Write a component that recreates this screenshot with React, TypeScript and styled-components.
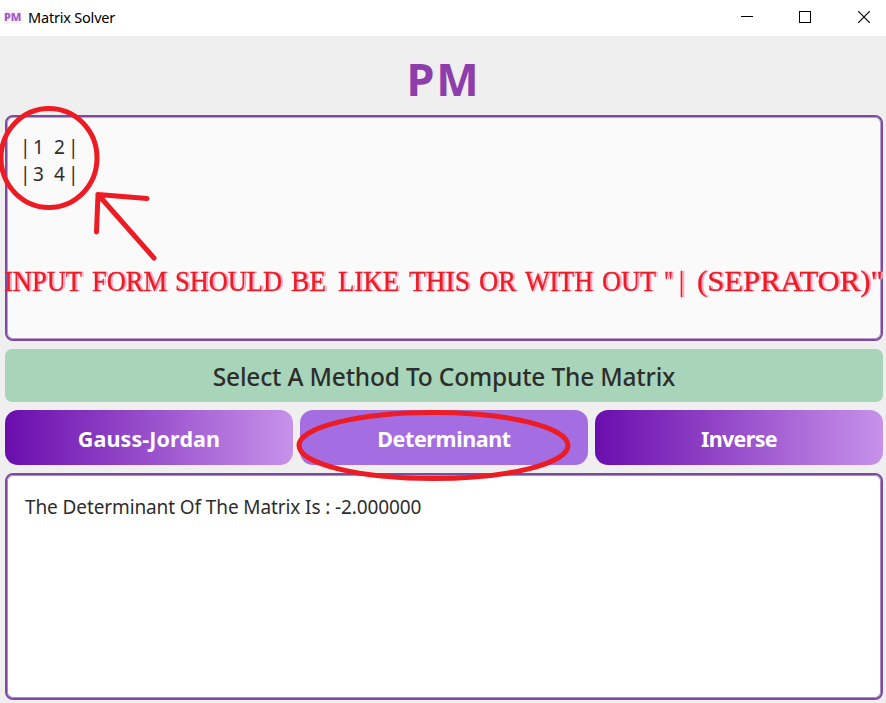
import React from "react";
import styled, { createGlobalStyle, css } from "styled-components";

const GlobalStyle = createGlobalStyle`
  * { box-sizing: border-box; }
  body { margin: 0; background: #efefef; overflow: hidden; }
`;

const Window = styled.main`
  position: relative;
  display: flex;
  flex-direction: column;
  width: 886px;
  height: 703px;
  background: #efefef;
  font-family: "Noto Sans", "Open Sans", sans-serif;
  color: #2d2d2d;
`;

const TitleBar = styled.header`
  display: flex;
  align-items: center;
  justify-content: space-between;
  flex: 0 0 36px;
  padding-left: 4px;
  background: #fff;
`;

const AppIdentity = styled.div`
  display: flex;
  align-items: center;
  gap: 6px;
  padding-bottom: 2px;
`;

const TinyLogo = styled.span`
  display: block;
  width: 18px;
  height: 14px;
  background: #faf3fc;
  color: #a45cc0;
  font: 900 11px/13px "Noto Sans", sans-serif;
  letter-spacing: -0.2px;
  filter: blur(0.7px);
`;

const Title = styled.span`
  font-size: 14.5px;
  line-height: 20px;
  letter-spacing: -0.2px;
  color: #000;
`;

const Controls = styled.div`
  display: flex;
  gap: 14px;
  height: 36px;
`;

const Control = styled.button`
  display: flex;
  align-items: center;
  justify-content: center;
  width: 44px;
  padding: 0 0 2px;
  border: 0;
  background: none;

  &:last-child { margin-left: 1px; }
`;

const Content = styled.section`
  display: flex;
  flex-direction: column;
  flex: 1;
  padding: 0 3px 3px 5px;
`;

const Brand = styled.h1`
  margin: 0;
  height: 79px;
  padding-right: 1px;
  text-align: center;
  color: #8e3eac;
  font-size: 45px;
  font-weight: 700;
  line-height: 86px;
  letter-spacing: 1.8px;
`;

const panel = css`
  border-radius: 8px;
  font-size: 19px;
  line-height: 27px;
  white-space: pre;
`;

const InputPanel = styled.div`
  ${panel}
  height: 226px;
  padding: 17px 13px;
  border: 2px solid #7c4ba0;
  box-shadow: inset 0 0 0 1px #b99fcd;
  background: #fafafa;
`;

const MatrixRow = styled.div`
  display: grid;
  grid-template-columns: 13px 21px 14px 8px;
`;

const Banner = styled.div`
  height: 53px;
  margin-top: 8px;
  border-radius: 7px;
  background: #a8d5ba;
  text-align: center;
  font-size: 24.5px;
  font-weight: 500;
  line-height: 56px;
  letter-spacing: -0.19px;
`;

const Methods = styled.div`
  display: grid;
  grid-template-columns: repeat(3, 1fr);
  gap: 7px;
  margin: 8px 0;
`;

const MethodButton = styled.button<{ $active?: boolean; $tracking?: number }>`
  height: 55px;
  padding: 3px 0 0;
  border: 0;
  border-radius: 13px;
  background: ${({ $active }) => ($active ? "#a56de2" : "linear-gradient(90deg, #6a0dad, #c792ea)")};
  color: #fff;
  font: 700 21.5px/30px "Noto Sans", sans-serif;
  letter-spacing: ${({ $tracking = -0.4 }) => $tracking}px;
`;

const OutputPanel = styled.div`
  ${panel}
  height: 227px;
  padding: 19px 18px;
  border: 2px solid #7c4ba0;
  box-shadow: inset 0 0 0 1px #a98ac3;
  background: #fff;
  letter-spacing: -0.11px;
`;

const Annotations = styled.svg`
  position: absolute;
  inset: 0;
  pointer-events: none;
`;

const Lettering = styled.text`
  fill: #ed1c24;
  font-family: "Liberation Serif", serif;
  font-size: 30px;
  stroke: #ed1c24;
  stroke-width: 0.3px;
  filter: drop-shadow(2px 0.5px 0 #f7a9c6);
`;

const words = [
  { text: "INPUT", x: 4, width: 78 },
  { text: "FORM", x: 92, width: 75 },
  { text: "SHOULD", x: 175, width: 107 },
  { text: "BE", x: 291, width: 35 },
  { text: "LIKE", x: 338, width: 61 },
  { text: "THIS", x: 409, width: 61 },
  { text: "OR", x: 479, width: 37 },
  { text: "WITH", x: 525, width: 68 },
  { text: "OUT", x: 602, width: 54 },
  { text: '"', x: 664, width: 9 },
  { text: "|", x: 679, width: 5 },
  { text: '(SEPRATOR)"', x: 697, width: 186 },
];

export default function App() {
  return (
    <>
      <GlobalStyle />
      <Window>
        <TitleBar>
          <AppIdentity>
            <TinyLogo>PM</TinyLogo>
            <Title>Matrix Solver</Title>
          </AppIdentity>
          <Controls>
            <Control aria-label="Minimize">
              <svg width="12" height="12" shapeRendering="crispEdges"><path d="M0 5.5H12" stroke="#000" /></svg>
            </Control>
            <Control aria-label="Maximize">
              <svg width="12" height="12" shapeRendering="crispEdges"><path d="M.5.5h11v11H.5z" fill="none" stroke="#000" /></svg>
            </Control>
            <Control aria-label="Close">
              <svg width="12" height="12"><path d="M0 0 12 12M12 0 0 12" stroke="#000" strokeWidth="1.15" /></svg>
            </Control>
          </Controls>
        </TitleBar>
        <Content>
          <Brand>PM</Brand>
          <InputPanel>
            <MatrixRow><span>|</span><span>1</span><span>2</span><span>|</span></MatrixRow>
            <MatrixRow><span>|</span><span>3</span><span>4</span><span>|</span></MatrixRow>
          </InputPanel>
          <Banner>Select A Method To Compute The Matrix</Banner>
          <Methods>
            <MethodButton $tracking={0.1}>Gauss-Jordan</MethodButton>
            <MethodButton $active>Determinant</MethodButton>
            <MethodButton $tracking={-0.7}>Inverse</MethodButton>
          </Methods>
          <OutputPanel>The Determinant Of The Matrix Is : -2.000000</OutputPanel>
        </Content>
        <Annotations width="886" height="703">
          <g fill="none" stroke="#ed1c24" strokeWidth="5" strokeLinecap="round" strokeLinejoin="round">
            <ellipse cx="49" cy="158" rx="48" ry="49.5" />
            <path d="M147 198.500 98 194.500 96.500 232M98 194.500 154 258" />
            <ellipse cx="433.500" cy="445.500" rx="134.500" ry="33" />
          </g>
          {words.map(({ text, x, width }) => (
            <Lettering key={text} x={x} y="291" textLength={width} lengthAdjust="spacingAndGlyphs">{text}</Lettering>
          ))}
        </Annotations>
      </Window>
    </>
  );
}
